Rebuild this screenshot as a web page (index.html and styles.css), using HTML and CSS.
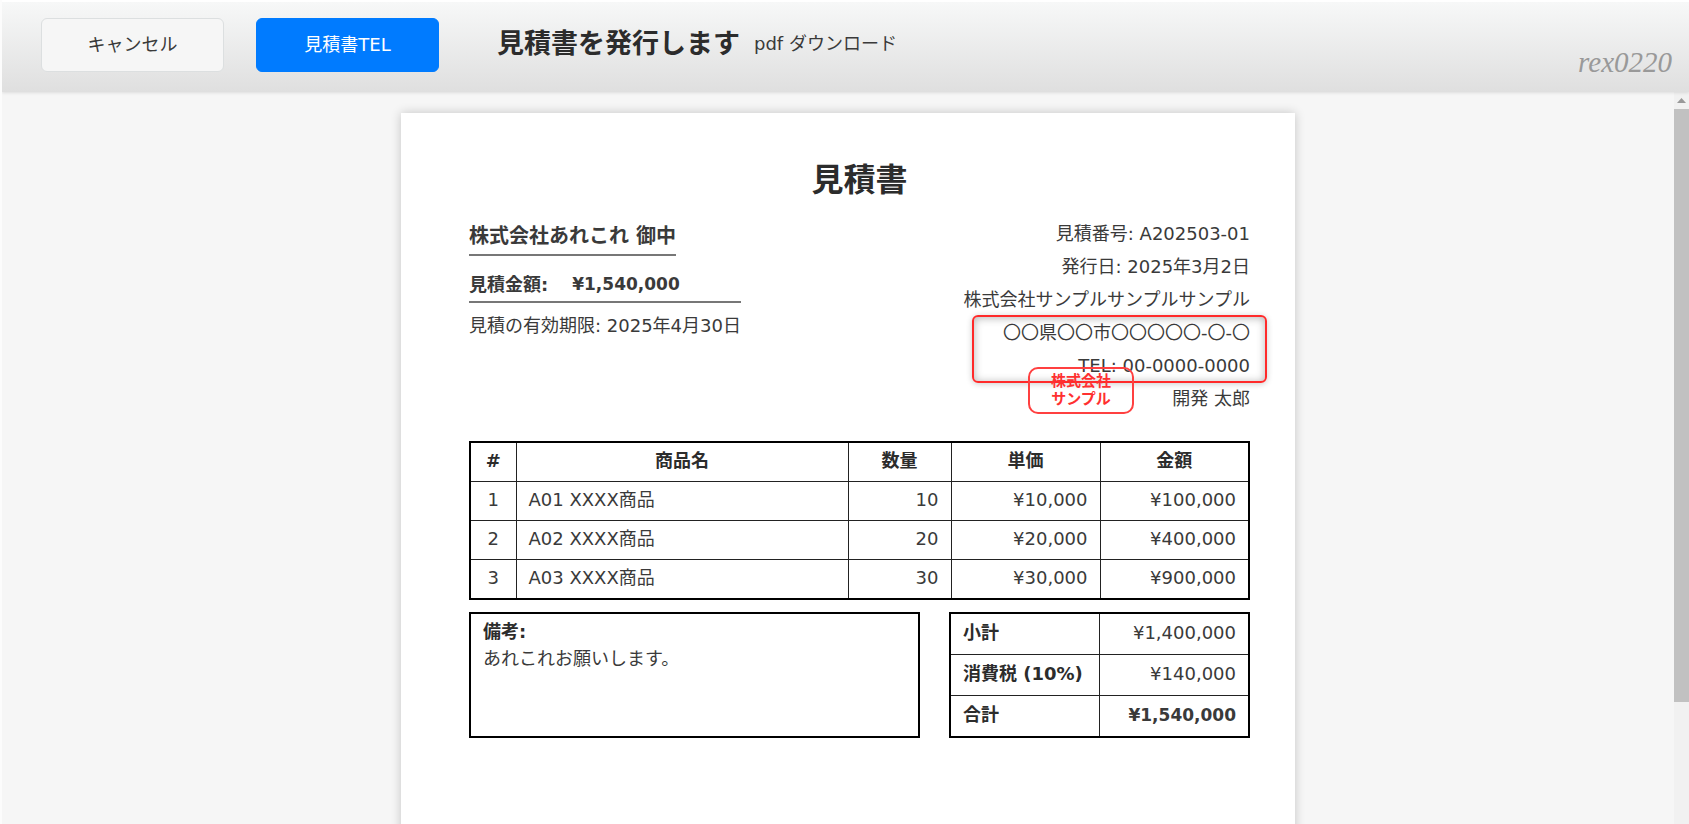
FILE: index.html
```html
<!DOCTYPE html>
<html lang="ja">
<head>
<meta charset="utf-8">
<meta name="viewport" content="width=device-width, initial-scale=1">
<title>見積書</title>
<link rel="stylesheet" href="styles.css">
</head>
<body>
<header class="toolbar">
  <button class="btn" type="button">キャンセル</button>
  <button class="btn btn-primary" type="button">見積書TEL</button>
  <h1 class="toolbar-title">見積書を発行します</h1>
  <span class="toolbar-note">pdf ダウンロード</span>
  <span class="signature">rex0220</span>
</header>
<div class="viewer">
  <main class="stage">
    <article class="paper">
      <h2 class="doc-title">見積書</h2>
      <section class="summary">
        <div class="customer">
          <p class="customer-name">株式会社あれこれ 御中</p>
          <p class="amount"><span>見積金額:</span><span class="amount-value">¥1,540,000</span></p>
          <p class="expiry">見積の有効期限: 2025年4月30日</p>
        </div>
        <div class="issuer">
          <p>見積番号: A202503-01</p>
          <p>発行日: 2025年3月2日</p>
          <p>株式会社サンプルサンプルサンプル</p>
          <div class="contact">
            <p>〇〇県〇〇市〇〇〇〇〇-〇-〇</p>
            <p>TEL: 00-0000-0000</p>
            <div class="stamp">株式会社<br>サンプル</div>
          </div>
          <p>開発 太郎</p>
        </div>
      </section>
      <table class="grid items">
        <colgroup><col class="col-no"><col><col class="col-qty"><col class="col-money"><col class="col-money"></colgroup>
        <thead>
          <tr><th>#</th><th>商品名</th><th>数量</th><th>単価</th><th>金額</th></tr>
        </thead>
        <tbody>
          <tr><td class="center">1</td><td>A01 XXXX商品</td><td class="num">10</td><td class="num">¥10,000</td><td class="num">¥100,000</td></tr>
          <tr><td class="center">2</td><td>A02 XXXX商品</td><td class="num">20</td><td class="num">¥20,000</td><td class="num">¥400,000</td></tr>
          <tr><td class="center">3</td><td>A03 XXXX商品</td><td class="num">30</td><td class="num">¥30,000</td><td class="num">¥900,000</td></tr>
        </tbody>
      </table>
      <section class="closing">
        <div class="remarks">
          <h3 class="remarks-title">備考:</h3>
          <p>あれこれお願いします。</p>
        </div>
        <table class="grid totals">
          <tbody>
            <tr><th scope="row">小計</th><td class="num">¥1,400,000</td></tr>
            <tr><th scope="row">消費税 (10%)</th><td class="num">¥140,000</td></tr>
            <tr><th scope="row">合計</th><td class="num grand">¥1,540,000</td></tr>
          </tbody>
        </table>
      </section>
    </article>
  </main>
  <div class="scrollbar" aria-hidden="true">
    <svg class="scroll-arrow" viewBox="0 0 15 17"><path d="M3 11 7.500 6l4.500 5z"/></svg>
    <div class="scroll-thumb"></div>
  </div>
</div>
</body>
</html>
```
FILE: styles.css
```css
* { box-sizing: border-box; }

body {
  margin: 0;
  height: 100vh;
  display: flex;
  flex-direction: column;
  overflow: hidden;
  border-left: 2px solid #fcfcfc;
  background: #f6f6f6;
  color: #3a3a3a;
  font-family: "DejaVu Sans", "Noto Sans CJK JP", sans-serif;
  font-size: 18px;
}

h1, h2, h3, p { margin: 0; }

h1, h2, h3, th { color: #2c2c2c; }

.toolbar {
  flex: none;
  display: flex;
  align-items: flex-start;
  height: 92px;
  padding: 16px 17px 0 39px;
  border-top: 2px solid #fff;
  background: linear-gradient(#f7f8f8, #dfdfdf);
  box-shadow: 0 1px 3px rgba(0, 0, 0, 0.1);
  position: relative;
  z-index: 1;
}

.btn {
  width: 183px;
  height: 54px;
  margin-right: 32px;
  padding: 0 0 4px;
  border: 1px solid #dcdfe0;
  border-radius: 6px;
  background: #f6f6f6;
  color: #3a3a3a;
  font: inherit;
}

.btn-primary {
  border-color: #007bff;
  background: #007bff;
  color: #fff;
}

.toolbar-title {
  margin-left: 26px;
  font-size: 27px;
  line-height: 52px;
}

.toolbar-note {
  margin-left: 14px;
  line-height: 52px;
}

.signature {
  margin-left: auto;
  padding-top: 26px;
  color: #999;
  font: italic 29px/36px "Liberation Serif", serif;
}

.viewer {
  flex: 1;
  min-height: 0;
  display: flex;
}

.stage {
  flex: 1;
  min-width: 0;
  padding: 21px 0 0 20px;
  overflow: hidden;
}

.paper {
  max-width: 894px;
  min-height: 1200px;
  margin: 0 auto;
  padding: 43px 45px 42px 68px;
  background: #fff;
  box-shadow: 0 0 10px rgba(0, 0, 0, 0.2);
}

.doc-title {
  font-size: 32px;
  line-height: 48px;
  text-align: center;
}

.summary {
  display: flex;
  justify-content: space-between;
  margin-top: 13px;
}

.customer-name {
  width: fit-content;
  padding-top: 3px;
  padding-bottom: 1px;
  border-bottom: 2px solid #777;
  font-size: 20px;
  font-weight: bold;
  line-height: 33px;
}

.amount {
  display: flex;
  gap: 24px;
  margin-top: 12px;
  border-bottom: 2px solid #777;
  font-weight: bold;
  line-height: 33px;
}

.amount-value, .grand { font-size: 17px; font-weight: bold; }

.expiry {
  margin-top: 6px;
  line-height: 33px;
}

.issuer {
  line-height: 33px;
  text-align: right;
}

.contact { position: relative; }

/* Highlight frame around the address lines */
.contact::before {
  content: "";
  position: absolute;
  inset: -1px -17px -1px auto;
  width: 291px;
  border: 2px solid #ff2a2a;
  border-radius: 6px;
  box-shadow: 0 1px 6px rgba(0, 0, 0, 0.2), inset 0 1px 8px rgba(0, 0, 0, 0.3);
}

.stamp {
  position: absolute;
  top: 51px;
  right: 116px;
  width: 106px;
  padding: 3px 0 4px;
  border: 2px solid #ff4040;
  border-radius: 10px;
  color: #ff3030;
  font-size: 15px;
  font-weight: bold;
  line-height: 18px;
  text-align: center;
}

.grid {
  border-collapse: collapse;
  border: 2px solid #000;
  table-layout: fixed;
  line-height: 24px;
}

.grid th, .grid td {
  padding: 6px 12px 8px;
  border: 1px solid #222;
}

.items {
  width: 100%;
  margin-top: 26px;
}

.col-no { width: 46px; }
.col-qty { width: 103px; }
.col-money { width: 149px; }

.center { text-align: center; }
.grid .num { text-align: right; }

.closing {
  display: flex;
  gap: 29px;
  margin-top: 12px;
}

.remarks {
  flex: 1;
  padding: 4px 12px;
  border: 2px solid #000;
  line-height: 27px;
}

.remarks-title { font-size: 18px; }

.totals { width: 301px; }

.totals th, .totals td {
  padding: 7px 12px 9px;
  white-space: nowrap;
}

.totals th { text-align: left; }

.scrollbar {
  flex: none;
  width: 15px;
  display: flex;
  flex-direction: column;
  background: #f1f1f1;
}

.scroll-arrow {
  flex: none;
  height: 17px;
  fill: #999;
}

.scroll-thumb {
  height: 81%;
  background: #c1c1c1;
}
```
